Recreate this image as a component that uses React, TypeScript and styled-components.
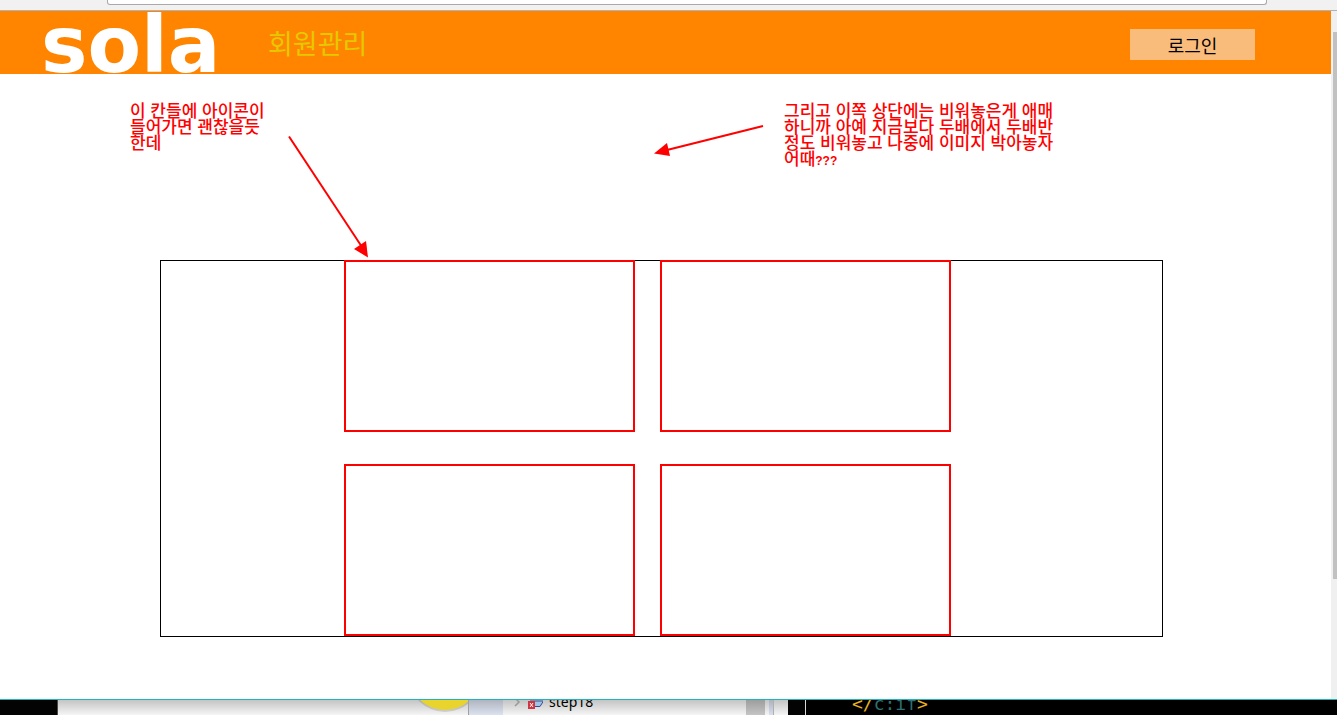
import React from "react";
import styled, { createGlobalStyle } from "styled-components";

const GlobalStyle = createGlobalStyle`
  *, *::before, *::after { box-sizing: border-box; }
  body {
    margin: 0;
    background: #ffffff;
    color: #000000;
    font-family: "Noto Sans CJK KR", sans-serif;
  }
  h1, p { margin: 0; font-weight: 400; }
`;

const Screen = styled.div`
  display: flex;
  flex-direction: column;
  height: 100vh;
  overflow: hidden;
`;

const BrowserBar = styled.div`
  flex: none;
  height: 11px;
  padding: 0 70px 0 107px;
  background: #f1f1f1;
  border-bottom: 1px solid #b2b2b2;
`;

const AddressField = styled.div`
  height: 5px;
  background: #ffffff;
  border: 1px solid #a9a9a9;
  border-top: 0;
  border-radius: 0 0 3px 3px;
`;

const Viewport = styled.div`
  flex: 1;
  min-height: 0;
  display: flex;
`;

const Page = styled.div`
  flex: 1;
  min-width: 0;
`;

const ScrollTrack = styled.div`
  flex: none;
  width: 6px;
  padding: 21px 0 0 2px;
  background: #f0f0f0;
`;

const ScrollThumb = styled.div`
  height: 82%;
  background: #c1c1c1;
`;

const Header = styled.header`
  display: flex;
  align-items: center;
  height: 63px;
  padding: 0 76px 0 41px;
  background: #ff8500;
`;

const Logo = styled.a`
  width: 227px;
  padding-top: 5px;
  color: #ffffff;
  font: 700 78px/63px "DejaVu Sans", sans-serif;
  text-decoration: none;
`;

const Title = styled.h1`
  flex: 1;
  color: #e6c800;
  font-size: 27px;
  line-height: 40px;
`;

const LoginButton = styled.button`
  width: 125px;
  height: 31px;
  margin-top: 4px;
  padding: 0;
  border: 0;
  background: #fabc7b;
  color: #000000;
  font: 400 18px/30px "Noto Sans CJK KR", sans-serif;
`;

const Notes = styled.section`
  display: flex;
  align-items: flex-start;
  height: 186px;
  padding: 30px 0 0 130px;
`;

const Note = styled.p<{ $width: number }>`
  flex: none;
  width: ${(p) => p.$width}px;
  color: #ff0000;
  font: 500 17px/16px "Liberation Sans", "Noto Sans CJK KR", sans-serif;
  white-space: nowrap;
`;

const Marks = styled.span`
  font-size: 12px;
  font-weight: 700;
`;

const Arrow = styled.svg<{ $before: number; $drop: number; $after: number }>`
  flex: none;
  display: block;
  margin: ${(p) => `${p.$drop}px ${p.$after}px 0 ${p.$before}px`};
  fill: #ff0000;
  stroke: #ff0000;
`;

const Board = styled.main`
  display: grid;
  grid-template-columns: repeat(2, 291px);
  grid-auto-rows: 172px;
  gap: 32px 25px;
  justify-content: center;
  margin: 0 168px 0 160px;
  padding: 0 28px 1px 0;
  box-shadow: inset 0 0 0 1px #000000;
`;

const Slot = styled.div`
  border: 2px solid #ff0000;
`;

const Desktop = styled.div`
  flex: none;
  display: flex;
  height: 16px;
  border-top: 1px solid #20b4bc;
  overflow: hidden;
  background: #000000;
`;

const Pane = styled.div<{ $width: number; $color?: string }>`
  flex: none;
  display: flex;
  align-items: flex-start;
  width: ${(p) => p.$width}px;
  overflow: hidden;
  background: linear-gradient(rgba(0, 0, 0, 0.2), rgba(0, 0, 0, 0)),
    ${(p) => p.$color || "#f5f5f5"};
`;

const Divider = styled.div<{ $color: string }>`
  flex: none;
  width: 1px;
  background: ${(p) => p.$color};
`;

const DarkPane = styled.div<{ $width: number }>`
  flex: none;
  width: ${(p) => p.$width}px;
  background: #030303;
`;

const Ball = styled.svg`
  display: block;
  margin-left: auto;
`;

const TreeIcons = styled.svg`
  flex: none;
  display: block;
  margin-right: 6px;
`;

const TreeLabel = styled.span`
  margin-top: -6px;
  font: 400 14px/16px "Noto Sans", sans-serif;
`;

const Code = styled.code`
  flex: 1;
  height: 20px;
  margin-top: -6px;
  padding-left: 46px;
  color: #2f7070;
  font: 400 18px/20px "DejaVu Sans Mono", monospace;
`;

const Bracket = styled.span`
  color: #e8b020;
`;

export default function App() {
  return (
    <Screen>
      <GlobalStyle />
      <BrowserBar>
        <AddressField />
      </BrowserBar>
      <Viewport>
        <Page>
          <Header>
            <Logo href="#">sola</Logo>
            <Title>회원관리</Title>
            <LoginButton type="button">로그인</LoginButton>
          </Header>
          <Notes>
            <Note $width={140}>
              이 칸들에 아이콘이
              <br />
              들어가면 괜찮을듯
              <br />
              한데
            </Note>
            <Arrow $before={18} $drop={32} $after={284} width="82" height="122" viewBox="288 136 82 122" aria-hidden="true">
              <path d="M289 136.500L362 247" strokeWidth="2" />
              <path d="M368 257.500L354 249L366 241Z" stroke="none" />
            </Arrow>
            <Arrow $before={0} $drop={20} $after={20} width="110" height="34" viewBox="654 124 110 34" aria-hidden="true">
              <path d="M763 126L667 150" strokeWidth="2" />
              <path d="M654 153.500L667 143L670 156Z" stroke="none" />
            </Arrow>
            <Note $width={280}>
              그리고 이쪽 상단에는 비워놓은게 애매
              <br />
              하니까 아예 지금보다 두배에서 두배반
              <br />
              정도 비워놓고 나중에 이미지 박아놓자
              <br />
              어때<Marks>???</Marks>
            </Note>
          </Notes>
          <Board>
            <Slot />
            <Slot />
            <Slot />
            <Slot />
          </Board>
        </Page>
        <ScrollTrack>
          <ScrollThumb />
        </ScrollTrack>
      </Viewport>
      <Desktop>
        <DarkPane $width={57} />
        <Divider $color="#50483f" />
        <Pane $width={410}>
          <Ball width="60" height="15" viewBox="408 700 60 15" aria-hidden="true">
            <circle cx="445" cy="676" r="36" fill="#000000" opacity="0.12" />
            <circle cx="445" cy="674" r="36" fill="#e8d42c" />
          </Ball>
        </Pane>
        <Divider $color="#a0a0a0" />
        <Pane $width={34} $color="#dce1f0" />
        <Pane $width={243}>
          <TreeIcons width="40" height="15" viewBox="503 700 40 15" aria-hidden="true">
            <path d="M515 698L519 702L515 706" fill="none" stroke="#999999" strokeWidth="1.500" />
            <path d="M530 701H543.500L540 706.500H532Z" fill="#9cc4e4" stroke="#3a4a94" />
            <rect x="528" y="701" width="7" height="8" fill="#cf3440" />
            <path d="M530 703L533 707M533 703L530 707" stroke="#ffffff" />
          </TreeIcons>
          <TreeLabel>step18</TreeLabel>
        </Pane>
        <Pane $width={19} $color="#c4c4c4" />
        <Pane $width={4} />
        <Pane $width={4} $color="#d8deee" />
        <Divider $color="#b0b0b0" />
        <Pane $width={14} />
        <DarkPane $width={17} />
        <Divider $color="#d8d8d8" />
        <Code>
          <Bracket>&lt;/</Bracket>c:if<Bracket>&gt;</Bracket>
        </Code>
      </Desktop>
    </Screen>
  );
}
